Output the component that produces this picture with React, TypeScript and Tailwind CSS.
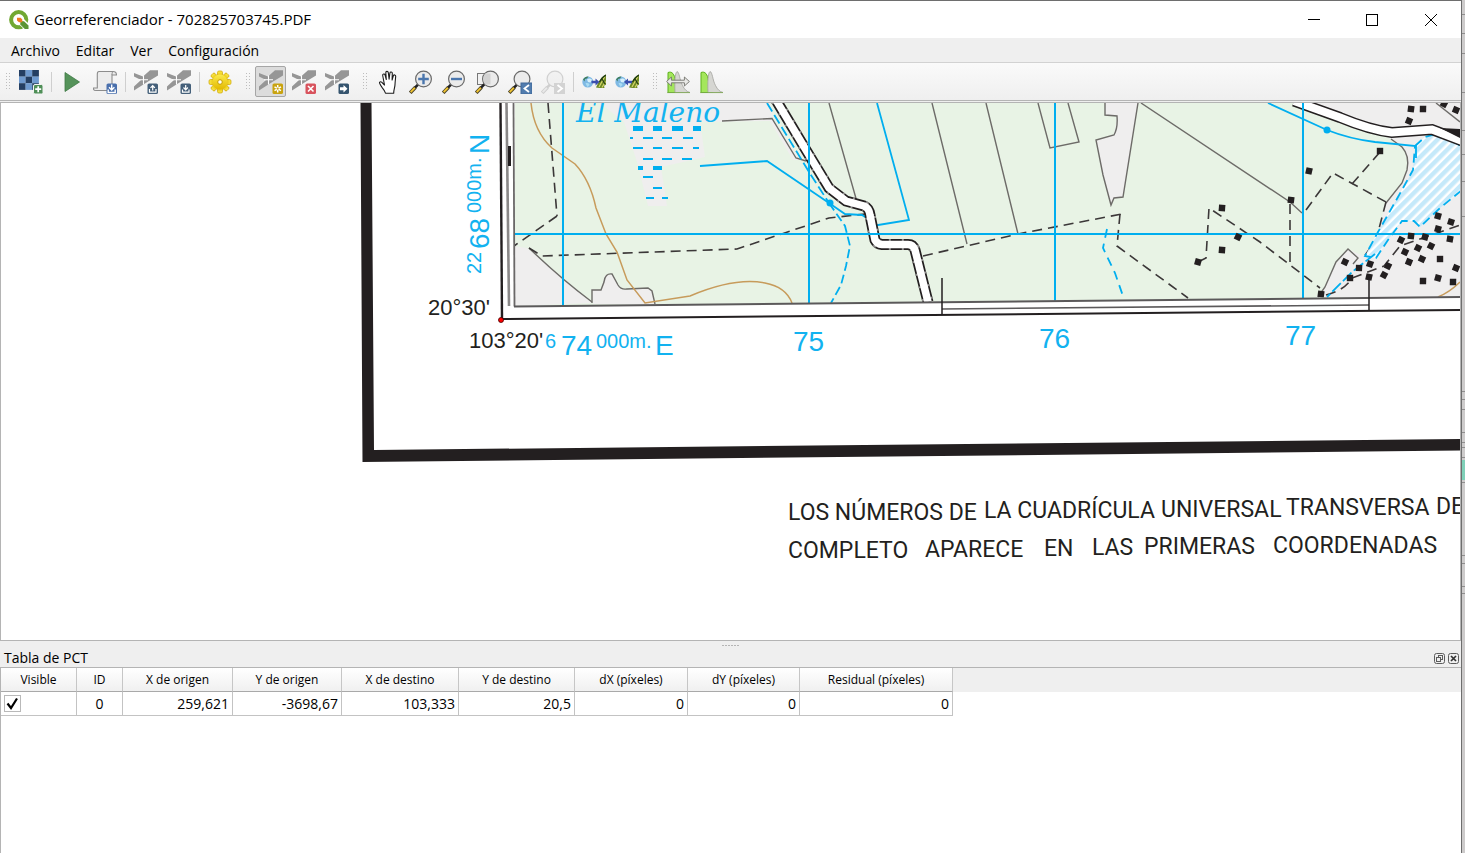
import type { ReactNode } from "react";

const CYAN = "#00aeef";
const INK = "#231f20";
const BUILT = "#efeeee";

/* ---------- Toolbar glyphs (24 x 24) ---------- */

function Glyph({ children }: { children: ReactNode }) {
  return (
    <svg viewBox="0 0 24 24" className="size-6" fill="none" aria-hidden="true">
      {children}
    </svg>
  );
}

function Badge({ fill, children }: { fill: string; children: ReactNode }) {
  return (
    <g>
      <rect x="13.5" y="13.5" width="10.5" height="10.5" rx="1.6" fill={fill} />
      {children}
    </g>
  );
}

function GcpBase() {
  return (
    <g>
      <path d="M0 3V6.500L7 10 0 16.500V20.500L12.500 12.500 24 5.500V.3H16L9 6.500z" fill="#969696" />
      <path d="M9.500 5.500v9M5 9.800h9" stroke="#fff" strokeWidth="1.100" />
    </g>
  );
}

function OpenRasterIcon() {
  const dark = "#243f63";
  const light = "#6f9bd0";
  const cells = [
    [dark, light, dark],
    [light, dark, light],
    [dark, light, dark],
  ];
  return (
    <Glyph>
      {cells.map((row, r) =>
        row.map((c, i) => <rect key={`${r}-${i}`} x={i * 6.6} y={r * 6.6} width="6.7" height="6.7" fill={c} />),
      )}
      <rect x="14.500" y="14.500" width="9.500" height="9.500" rx="1.500" fill="#4f8f57" stroke="#f4f4f4" />
      <path d="M19.200 16.200v6M16.200 19.200h6" stroke="#fff" strokeWidth="1.700" />
    </Glyph>
  );
}

function PlayIcon() {
  return (
    <Glyph>
      <path d="M5 2.500 19.500 12 5 21.500z" fill="#55935a" stroke="#3f7a45" strokeWidth=".8" />
    </Glyph>
  );
}

function ScriptIcon() {
  return (
    <Glyph>
      <path
        d="M6 1.500h14c2.500 0 3.500 1.500 3.500 3.500H19v15.500H3c-2 0-2.700-1-2.700-2.500h4V4c0-1.500.5-2.500 1.700-2.500z"
        fill="#ececec"
        stroke="#8c8c8c"
        strokeWidth="1.100"
      />
      <path d="M19 5c0-2 .2-3 1.300-3.400" stroke="#8c8c8c" />
      <Badge fill="#4a70ad">
        <path d="M18.700 14.500v5M16 17.300l2.700 2.700 2.700-2.700M15.200 19.500v3h7v-3" stroke="#fff" strokeWidth="1.400" />
      </Badge>
    </Glyph>
  );
}

function LoadGcpIcon() {
  return (
    <Glyph>
      <GcpBase />
      <Badge fill="#45607a">
        <path d="M18.700 20.500V16M16.500 17.800l2.200-2.300 2.200 2.300M15.500 19v3.200h6.500V19" stroke="#fff" strokeWidth="1.200" />
      </Badge>
    </Glyph>
  );
}

function SaveGcpIcon() {
  return (
    <Glyph>
      <GcpBase />
      <Badge fill="#45607a">
        <path d="M18.700 15v4.500M16.500 17.500l2.200 2.300 2.200-2.300M15.500 19.500v2.700h6.500v-2.700" stroke="#fff" strokeWidth="1.200" />
      </Badge>
    </Glyph>
  );
}

function GearIcon() {
  return (
    <Glyph>
      <defs>
        <linearGradient id="gear" x1="0" y1="0" x2="0" y2="1">
          <stop offset="0" stopColor="#fbea4c" />
          <stop offset="1" stopColor="#e2b800" />
        </linearGradient>
      </defs>
      {Array.from({ length: 8 }, (_, i) => (
        <rect
          key={i}
          x="9.500"
          y="1"
          width="5"
          height="6"
          rx="1.500"
          fill="url(#gear)"
          stroke="#cda400"
          strokeWidth=".7"
          transform={`rotate(${i * 45} 12 12)`}
        />
      ))}
      <circle cx="12" cy="12" r="7.600" fill="url(#gear)" />
      <circle cx="12" cy="12" r="2.300" fill="#fff" stroke="#c79d00" />
    </Glyph>
  );
}

function AddPointIcon() {
  return (
    <Glyph>
      <GcpBase />
      <Badge fill="#c9a30f">
        <path d="M18.700 15v7.500M15.500 16.900l6.500 3.700M22 16.900l-6.500 3.700" stroke="#fff" strokeWidth="1.500" />
        <circle cx="18.700" cy="18.700" r="1.100" fill="#c9a30f" />
      </Badge>
    </Glyph>
  );
}

function DeletePointIcon() {
  return (
    <Glyph>
      <GcpBase />
      <Badge fill="#d8535d">
        <path d="m16 16 5.500 5.500M21.500 16 16 21.500" stroke="#fff" strokeWidth="1.600" />
      </Badge>
    </Glyph>
  );
}

function MovePointIcon() {
  return (
    <Glyph>
      <GcpBase />
      <Badge fill="#35546e">
        <path d="M15 17.200h3.500V15l4 3.700-4 3.800v-2.300H15z" fill="#fff" />
      </Badge>
    </Glyph>
  );
}

function HandIcon() {
  return (
    <Glyph>
      <path
        d="M9.500 23.200c-.5-2-1.600-3.500-3.300-5.600-1-1.300-2-3-2.600-4.300-.5-1.200.9-2 2-1.200L8.500 15 6.700 5.500c-.3-1.600 1.900-2.200 2.400-.5l1.200 4.500-.5-6.800c-.1-1.700 2.200-1.800 2.500-.2l.8 6.700.8-6.200c.3-1.500 2.400-1.200 2.400.3l-.2 6.700 1.300-4.300c.5-1.400 2.400-.9 2.300.6-.1 2-.6 5-.7 8.200-.1 3.200-1.200 4.500-1.300 8.700z"
        fill="#fff"
        stroke="#1c1c1c"
        strokeWidth="1.100"
        strokeLinejoin="round"
      />
    </Glyph>
  );
}

function Lens({ cx = 14.5, faded = false, children }: { cx?: number; faded?: boolean; children?: ReactNode }) {
  return (
    <g opacity={faded ? 0.4 : 1}>
      <path d="M1.200 22.800 6.500 17.200" stroke={faded ? "#999" : "#4b4326"} strokeWidth="3.600" />
      <path d="M1.700 22.200 6 17.700" stroke={faded ? "#ddd" : "#f2c531"} strokeWidth="1.900" />
      <path d="m6 17.700 4-4" stroke={faded ? "#999" : "#222"} strokeWidth="2.600" />
      <circle cx={cx} cy="9" r="7.900" fill="#ebebeb" stroke={faded ? "#999" : "#6a6a6a"} strokeWidth="1.200" />
      {children}
    </g>
  );
}

function ZoomInIcon() {
  return (
    <Glyph>
      <Lens>
        <path d="M14.500 3.700v10.600M9.200 9h10.600" stroke="#4a76ad" strokeWidth="2.400" />
      </Lens>
    </Glyph>
  );
}

function ZoomOutIcon() {
  return (
    <Glyph>
      <Lens>
        <path d="M9 9h11" stroke="#4a76ad" strokeWidth="2.400" />
      </Lens>
    </Glyph>
  );
}

function ZoomLayerIcon() {
  return (
    <Glyph>
      <rect x="2.500" y="3.500" width="12" height="11" fill="#f1f1f1" stroke="#777" />
      <Lens cx={15.5}>
        <path d="M15.500 3.500v11h-5.300c-2.500-3-2.500-8 0-11z" fill="#d2d2d2" />
      </Lens>
    </Glyph>
  );
}

function ZoomLastIcon() {
  return (
    <Glyph>
      <Lens cx={14} />
      <rect x="13" y="13" width="11" height="11" fill="#517cae" stroke="#41699a" />
      <path d="m21 15-4.500 3.500L21 22" stroke="#fff" strokeWidth="1.800" />
    </Glyph>
  );
}

function ZoomNextIcon() {
  return (
    <Glyph>
      <Lens cx={14} faded />
      <rect x="13" y="13" width="11" height="11" fill="#d3d3d3" />
      <path d="m16.500 15 4.500 3.500-4.500 3.500" stroke="#fff" strokeWidth="1.800" />
    </Glyph>
  );
}

function LinkIcon({ reverse = false }: { reverse?: boolean }) {
  return (
    <Glyph>
      <circle cx="5.800" cy="12" r="5.500" fill="#7fb9e4" />
      <path d="M1 9.500c1.500-2.500 3.500-3.300 5.500-3l-1.500 2-2 .5-.5 2.500z" fill="#3f7d5c" />
      <path d="M5 9.500c2-1.500 4-1 5 .5l-1.500 2.500L6 12z" fill="#d7f0fb" />
      <path d="M3.500 13.500c2-1 4 0 4 1.500l-2 2z" fill="#a8dcf3" />
      <path d="M24 4.500v10.300l-2 1 .5 2.200h-5l-3.500-.5C17 11 19 7 24 4.500z" fill="#6d8a26" />
      <path d="M22.800 6.500 17 17M23.500 11.500 20 17.500" stroke="#d9d66a" strokeWidth="1.200" />
      <path d="M24 5c-3 1.500-5 4-6.500 7M20 9l3 5" stroke="#1f3a12" strokeWidth="1.200" />
      {reverse ? (
        <path d="m9 12 4-3.500v2.300h4v2.400h-4v2.300z" fill="#3b4fae" />
      ) : (
        <path d="m17.500 12-4-3.500v2.300h-4v2.400h4v2.300z" fill="#3b4fae" />
      )}
    </Glyph>
  );
}

function Histogram() {
  return (
    <g>
      <path d="M2 22.500V2.500C6 1 8.500 4 9.500 11c.7 5 1.500 9 4 11.500z" fill="#a4e65c" stroke="#5db01d" strokeWidth="1" />
      <path d="M9 22.500C8.500 12 9 3 11 1.500c2.500.5 2.500 8.500 5.500 14 2 4 4 6 7.500 7z" fill="#d6d6d2" stroke="#a2a29d" strokeWidth=".8" />
      <path d="M1 22.600h23" stroke="#7dab4e" strokeWidth=".8" />
    </g>
  );
}

function FullHistogramIcon() {
  return (
    <Glyph>
      <Histogram />
      <path
        d="M.6 11.500 5.400 7v3.200h13V7l5 4.500-5 4.500v-3.200h-13V16z"
        fill="#e9e9e6"
        stroke="#72726c"
        strokeWidth=".9"
      />
    </Glyph>
  );
}

function LocalHistogramIcon() {
  return (
    <Glyph>
      <Histogram />
    </Glyph>
  );
}

function QgisLogo() {
  return (
    <svg viewBox="0 0 20 20" className="size-5" aria-hidden="true">
      <circle cx="9.700" cy="9.700" r="7.600" fill="none" stroke="#71a832" strokeWidth="4" />
      <path d="m9 8.500 5.500.3 5.500 5.200v5.500h-4.500L9 13.500z" fill="#fff" />
      <path d="m11.500 11 3.500.2 4.500 4.300V19h-3.700l-4.600-4.500z" fill="#5b9334" />
      <path d="M8 7.800h3.600l1.700 1.700v2.800H10L8 10.500z" fill="#ee7b22" />
    </svg>
  );
}

/* ---------- Toolbar ---------- */

interface Tool {
  label: string;
  icon: ReactNode;
  active?: boolean;
  disabled?: boolean;
}

const toolbars: Tool[][][] = [
  [
    [{ label: "Abrir ráster", icon: <OpenRasterIcon /> }],
    [
      { label: "Comenzar georreferenciado", icon: <PlayIcon /> },
      { label: "Generar script de GDAL", icon: <ScriptIcon /> },
    ],
    [
      { label: "Cargar puntos PCT", icon: <LoadGcpIcon /> },
      { label: "Guardar puntos PCT como", icon: <SaveGcpIcon /> },
    ],
    [{ label: "Configuración de la transformación", icon: <GearIcon /> }],
  ],
  [
    [
      { label: "Añadir punto", icon: <AddPointIcon />, active: true },
      { label: "Borrar punto", icon: <DeletePointIcon /> },
      { label: "Mover punto PCT", icon: <MovePointIcon /> },
    ],
  ],
  [
    [
      { label: "Desplazar", icon: <HandIcon /> },
      { label: "Acercar zum", icon: <ZoomInIcon /> },
      { label: "Alejar zum", icon: <ZoomOutIcon /> },
      { label: "Zum a la capa", icon: <ZoomLayerIcon /> },
      { label: "Zum anterior", icon: <ZoomLastIcon /> },
      { label: "Zum siguiente", icon: <ZoomNextIcon />, disabled: true },
    ],
    [
      { label: "Enlazar georreferenciador con QGIS", icon: <LinkIcon /> },
      { label: "Enlazar QGIS con georreferenciador", icon: <LinkIcon reverse /> },
    ],
  ],
  [
    [
      { label: "Estirar histograma completo", icon: <FullHistogramIcon /> },
      { label: "Estirar histograma local", icon: <LocalHistogramIcon /> },
    ],
  ],
];

function ToolButton({ label, icon, active, disabled }: Tool) {
  return (
    <button
      type="button"
      aria-label={label}
      aria-pressed={active}
      disabled={disabled}
      className={
        active
          ? "flex h-[31px] w-[31px] items-center justify-center rounded-[2px] border border-[#a6a6a6] bg-[#dcdcdc]"
          : "flex h-[31px] w-[31px] items-center justify-center"
      }
    >
      {icon}
    </button>
  );
}

function Grip() {
  return (
    <svg viewBox="0 0 5 18" className="h-[18px] w-[5px]" aria-hidden="true">
      {Array.from({ length: 6 }, (_, i) => (
        <g key={i} fill="#bdbdbd">
          <rect x="0" y={i * 3} width="1" height="1" />
          <rect x="3" y={i * 3} width="1" height="1" />
        </g>
      ))}
    </svg>
  );
}

function Toolbars() {
  return (
    <div className="flex h-[38px] items-center border-b border-[#b4b4b4] bg-linear-to-b from-[#fafafa] to-[#efefef]">
      {toolbars.map((groups, b) => (
        <div key={b} role="toolbar" className="flex items-center">
          <div className={b === 0 ? "w-[15px] pl-1.5" : "w-5 pl-[11px]"}>
            <Grip />
          </div>
          {groups.map((group, g) => (
            <div key={g} className="flex items-center">
              {g > 0 && (
                <div className="flex w-[10px] justify-center">
                  <div className="h-5 w-px bg-[#cfcfcf]" />
                </div>
              )}
              <div className="flex gap-0.5">
                {group.map((tool) => (
                  <ToolButton key={tool.label} {...tool} />
                ))}
              </div>
            </div>
          ))}
        </div>
      ))}
    </div>
  );
}

/* ---------- Map canvas ---------- */

const marshDashes: [number, number, number, number][] = [
  [633, 128.5, 10, 5], [653, 128.5, 9, 5], [672, 128.5, 11, 5], [693, 128.5, 8, 5],
  [630, 138, 3, 2], [643, 138, 10, 2], [662, 138, 10, 2], [683, 138, 10, 2],
  [633, 148, 10, 2], [653, 148, 9, 2], [672, 148, 11, 2], [693, 148, 6, 2],
  [643, 159, 10, 2], [662, 159, 10, 2], [682, 159, 10, 2],
  [638, 168, 5, 4], [653, 168, 9, 4],
  [643, 177, 10, 2], [653, 188, 9, 2], [646, 198, 8, 2], [662, 198, 6, 2],
];

const houses: [number, number][] = [
  [1411, 109], [1423, 109], [1409, 121], [1444, 104], [1456, 110],
  [1380, 151], [1309, 171], [1291, 200], [1222, 208], [1238, 237], [1222, 250], [1198, 262],
  [1438, 216], [1451, 222], [1438, 229], [1450, 239], [1401, 240], [1411, 236], [1425, 237],
  [1431, 246], [1418, 248], [1405, 252], [1409, 262], [1422, 259], [1440, 259], [1456, 268],
  [1345, 262], [1359, 268], [1370, 264], [1388, 266], [1350, 278], [1369, 277], [1384, 275],
  [1423, 281], [1438, 278], [1453, 282], [1321, 294],
];

const mainRoad = "M776 100 806 150 829 188 846 201 864 206Q869 208 870 215L875 240Q877 244 882 244.500H907Q913 244 915 250L928 302";
const topRoad = "M1294 101 1340 117.500Q1370 130 1392 132.500L1432 129.500 1462 141";
const lake =
  "M1415 146 1425 137 1436 134 1448 138 1462 147V190L1440 208 1420 227 1414 221 1402 221 1388 240 1376 258 1365 256 1378 232 1398 197 1413 170z";

const captionTop: [string, number, number][] = [
  ["LOS NÚMEROS DE", 788, 520],
  ["LA CUADRÍCULA", 984, 518],
  ["UNIVERSAL", 1161, 517],
  ["TRANSVERSA", 1286, 515],
  ["DE", 1436, 514],
];
const captionBottom: [string, number, number][] = [
  ["COMPLETO", 788, 558],
  ["APARECE", 925, 557],
  ["EN", 1044, 556],
  ["LAS", 1092, 555],
  ["PRIMERAS", 1144, 554],
  ["COORDENADAS", 1273, 553],
];

function MapCanvas() {
  return (
    <svg
      viewBox="1 103 1459 537"
      preserveAspectRatio="xMinYMin slice"
      className="absolute inset-0 size-full"
      fill="none"
      role="img"
      aria-label="Mapa ráster"
    >
      <defs>
        <pattern id="water" width="7" height="7" patternUnits="userSpaceOnUse" patternTransform="rotate(45)">
          <rect width="7" height="7" fill="#fff" />
          <rect width="4.500" height="7" fill="#c5e9fa" />
        </pattern>
      </defs>

      <path d="M360.500 103H371.500L374 450 1460 439V450.500L362.500 462z" fill={INK} />

      <path d="M514 103H1460V297L514 306z" fill="#e8f3e5" />

      <g fill={BUILT}>
        <path d="M514 246 527 248 592 303 514 306z" />
        <path d="M593 304 592 289 601 290 605 275H612L618 285 623 290 648 288 652 291 654 304z" />
        <path d="M600 103H770L773 119 800 160H793L770 121 700 122 705 157 661 167 667 206H648L638 165 624 122z" />
        <path d="M1105 103V115L1117 116 1114 135 1096 140 1103 175 1111 205 1114 198 1123 197 1138 103z" />
        <path d="M1305 103H1460V297H1316L1325 287 1336 263 1348 249 1363 256 1378 232 1386 203 1404 180 1408 165 1405 150 1391 139z" />
      </g>

      <g stroke="#6d6b68" strokeWidth="1.400">
        <path d="M529 248Q560 278 592 302" />
        <path d="M592 303V290L601 290 604 282Q605 273 612 274L618 285Q621 290 627 289L648 288 652 291 655 304" />
        <path d="M722 121 772 118.500 796 158 806 161" />
        <path d="M829 103 857 202M932 103 967 244M986 103 1018 234" />
        <path d="M1038 103 1050 148 1079 142 1068 103" />
        <path d="M1105 103V115L1117 116Q1118 128 1114 135L1096 140 1103 175 1111 205 1114 198 1123 197 1138 103" />
        <path d="M1141 103 1290 202 1302 213" />
        <path d="M1391 139 1402 147Q1410 156 1407 170L1402 183 1386 203" />
        <path d="M1436 103 1460 122" />
        <path d="M1318 297 1325 287 1336 262 1348 249 1358 258 1353 264" />
      </g>

      <g stroke="#3b3738" strokeWidth="1.600" strokeDasharray="10 6">
        <path d="M548 103 557 216M557 216 514 246" />
        <path d="M529 248 542 256 737 249 829 218 865 214" />
        <path d="M923 256 1018 234 1122 214" />
        <path d="M1120 214 1117 246 1188 298" />
        <path d="M1198 262 1206 258 1209 208 1260 242 1320 288" />
        <path d="M1290 204V262" />
        <path d="M1306 210 1333 173 1386 202" />
        <path d="M1352 184 1380 152" />
        <path d="M1386 202 1376 240 1363 258" />
        <path d="M1326 295Q1345 290 1352 278L1384 266 1400 246 1460 225" />
      </g>

      <g stroke="#c79b5b" strokeWidth="1.500">
        <path d="M531 103Q534 132 552 148L575 164Q590 180 596 208L606 234 617 252 627 280 645 303 690 296Q735 277 765 283 786 287 792 303" />
        <path d="M1438 297Q1450 292 1460 282" />
      </g>

      <path d={lake} fill="url(#water)" stroke={CYAN} strokeWidth="1.800" strokeDasharray="9 5" />
      <path d="M1375 254 1352 272 1327 297" stroke={CYAN} strokeWidth="1.800" strokeDasharray="12 3" />

      <g stroke={CYAN} strokeWidth="1.800">
        <path d="M700 166 767 161 829 203 845 214 862 215 870 220" />
        <path d="M877 103 909 220 872 226" />
        <path d="M1268 103 1327 130Q1350 139 1375 142L1416 146V158" />
        <path d="M767 103 809 172 829 203" strokeDasharray="10 4" />
        <path d="M829 203 845 226 850 246 846 266 841 285 831 303" strokeDasharray="9 4" />
        <path d="M1107 229 1103 248 1115 273 1124 299" strokeDasharray="9 6" />
      </g>

      <path d={mainRoad} stroke={INK} strokeWidth="11" />
      <path d={mainRoad} stroke="#8d8b8b" strokeWidth="11" strokeDasharray="2 11" />
      <path d={mainRoad} stroke="#fff" strokeWidth="7.500" />
      <path d={topRoad} stroke={INK} strokeWidth="11" />
      <path d={topRoad} stroke="#fff" strokeWidth="8" />
      <path d="M1440 128 1460 129V138L1450 133z" fill={INK} />

      <g stroke={CYAN} strokeWidth="2">
        <path d="M563 103V307M809 103V304M1055 103V301M1303 103V298M514 234H1460" />
      </g>

      {marshDashes.map(([x, y, w, h]) => (
        <rect key={`${x}-${y}`} x={x} y={y - h / 2} width={w} height={h} fill={CYAN} />
      ))}
      <circle cx="830" cy="203" r="3.500" fill={CYAN} />
      <circle cx="1327" cy="130" r="3.500" fill={CYAN} />
      {houses.map(([x, y]) => (
        <rect
          key={`${x}-${y}`}
          x={x - 3.2}
          y={y - 3.2}
          width="6.4"
          height="6.4"
          fill={INK}
          transform={`rotate(${(x * 7) % 30} ${x} ${y})`}
        />
      ))}

      <path d="M499 103H515V306L1460 296.500V311L501 320z" fill="#fff" />
      <g stroke={INK}>
        <path d="M500.500 103 502 319" strokeWidth="2.400" />
        <path d="M506.500 103 509 306" stroke="#8a8888" strokeWidth="2.600" />
        <path d="M509.500 146V166" strokeWidth="3" />
        <path d="M513.500 103 514.500 306.500" stroke="#6a6868" strokeWidth="1.800" />
        <path d="M514 306.500 1460 297" stroke="#5b595a" strokeWidth="2" />
        <path d="M501 319 1460 310" strokeWidth="2" />
        <path d="M942 309 1369 305" stroke="#5b595a" strokeWidth="1.600" />
        <path d="M942 278V315M1369 276V310" strokeWidth="1.500" />
      </g>
      <circle cx="501" cy="320" r="2.500" fill="#f00" stroke="#400" strokeWidth=".8" />

      <text x="576" y="122" className="font-['DejaVu_Serif',serif] text-[28px] italic" fill="#12b2f0">
        El Maleno
      </text>

      <g className="font-['Liberation_Sans',sans-serif]">
        <g className="text-[22px]" fill={INK}>
          <text x="428" y="315">20°30'</text>
          <text x="469" y="348">103°20'</text>
        </g>
        <g fill="#12b2f0">
          <text x="545" y="348" className="text-[20px]">6</text>
          <text x="561" y="355" className="text-[28px]">74</text>
          <text x="596" y="348" className="text-[20px]">000m.</text>
          <text x="655" y="355" className="text-[28px]">E</text>
          <text x="793" y="351" className="text-[28px]">75</text>
          <text x="1039" y="348" className="text-[28px]">76</text>
          <text x="1285" y="345" className="text-[28px]">77</text>
          <g transform="rotate(-90)">
            <text x="-274" y="481" className="text-[20px]">22</text>
            <text x="-249" y="489" className="text-[28px]">68</text>
            <text x="-213" y="481" className="text-[20px]">000m.</text>
            <text x="-154" y="489" className="text-[28px]">N</text>
          </g>
        </g>
      </g>
      <g className="font-['Roboto','Liberation_Sans',sans-serif] text-[23px]" fill={INK}>
        {[...captionTop, ...captionBottom].map(([t, x, y]) => (
          <text key={t} x={x} y={y}>
            {t}
          </text>
        ))}
      </g>
    </svg>
  );
}

/* ---------- GCP table ---------- */

function GcpTable() {
  const th =
    "border-r border-b border-r-[#c6c6c6] border-b-[#a9a9a9] bg-linear-to-b from-white to-[#f0f0f0] p-0 text-center font-normal";
  const td = "border-r border-b border-[#c3c3c3] p-0 pr-[3px] text-right";
  return (
    <section aria-label="Tabla de PCT" className="flex h-[213px] flex-col border-t border-[#b4b4b4] bg-[#efefef]">
      <div className="flex h-2 items-center justify-center text-[#b5b5b5]">
        <svg viewBox="0 0 17 1" className="h-px w-[17px]" aria-hidden="true">
          <path d="M0 .5h17" stroke="currentColor" strokeDasharray="2 1" />
        </svg>
      </div>
      <div className="flex h-[18px] items-center justify-between pr-0.5 pl-1">
        <h2 className="text-[14px] leading-[18px]">Tabla de PCT</h2>
        <div className="flex gap-[3px]">
          <button type="button" aria-label="Flotar panel">
            <svg viewBox="0 0 11 11" className="size-[11px]" fill="none" stroke="#5c5c5c" aria-hidden="true">
              <rect x=".5" y=".5" width="10" height="10" rx="2" />
              <rect x="4.500" y="2.500" width="4" height="4" />
              <rect x="2.500" y="4.500" width="4" height="4" fill="#efefef" />
            </svg>
          </button>
          <button type="button" aria-label="Cerrar panel">
            <svg viewBox="0 0 11 11" className="size-[11px]" fill="none" stroke="#5c5c5c" aria-hidden="true">
              <rect x=".5" y=".5" width="10" height="10" rx="2" />
              <path d="m3 3 5 5M8 3 3 8" stroke="#333" strokeWidth="1.700" />
            </svg>
          </button>
        </div>
      </div>
      <div className="flex-1 border-t border-l border-[#b4b4b4] bg-[linear-gradient(#efefef_24px,white_24px)]">
        <table className="w-[952px] table-fixed border-separate border-spacing-0">
          <colgroup>
            <col className="w-[76px]" />
            <col className="w-[46px]" />
            <col className="w-[110px]" />
            <col className="w-[109px]" />
            <col className="w-[117px]" />
            <col className="w-[116px]" />
            <col className="w-[113px]" />
            <col className="w-[112px]" />
            <col className="w-[153px]" />
          </colgroup>
          <thead>
            <tr className="h-6 text-[12px]">
              {[
                "Visible",
                "ID",
                "X de origen",
                "Y de origen",
                "X de destino",
                "Y de destino",
                "dX (píxeles)",
                "dY (píxeles)",
                "Residual (píxeles)",
              ].map((h) => (
                <th key={h} scope="col" className={th}>
                  {h}
                </th>
              ))}
            </tr>
          </thead>
          <tbody>
            <tr className="h-6 bg-white text-[14px]">
              <td className="border-r border-b border-[#c3c3c3] p-0">
                <label className="relative ml-[3px] block size-[17px]">
                  <input
                    type="checkbox"
                    defaultChecked
                    aria-label="Visible"
                    className="peer block size-[17px] appearance-none border border-[#b9b9b9] bg-white"
                  />
                  <svg
                    viewBox="0 0 17 17"
                    className="pointer-events-none absolute inset-0 hidden size-[17px] peer-checked:block"
                    fill="none"
                    aria-hidden="true"
                  >
                    <path d="m3.500 8.500 3.500 4.500 6-9.500" stroke="#000" strokeWidth="2.200" />
                  </svg>
                </label>
              </td>
              <td className="border-r border-b border-[#c3c3c3] p-0 text-center">0</td>
              {["259,621", "-3698,67", "103,333", "20,5", "0", "0", "0"].map((v, i) => (
                <td key={i} className={td}>
                  {v}
                </td>
              ))}
            </tr>
          </tbody>
        </table>
      </div>
    </section>
  );
}

/* ---------- Window ---------- */

export default function App() {
  return (
    <div className="flex min-h-screen bg-[#cdcbcb] font-['Open_Sans','Noto_Sans',sans-serif] text-black">
      <main className="flex min-w-0 flex-1 flex-col border-t border-r border-[#6e6e6e] bg-[#efefef]">
        <header className="flex h-[37px] items-center justify-between bg-white pl-[9px]">
          <div className="flex items-center gap-[5px]">
            <QgisLogo />
            <h1 className="text-[15px]">Georreferenciador - 702825703745.PDF</h1>
          </div>
          <div className="flex h-full">
            <button type="button" aria-label="Minimizar" className="flex w-[58px] items-center justify-center">
              <svg viewBox="0 0 12 12" className="size-3" stroke="#000" fill="none" aria-hidden="true">
                <path d="M0 5.500h12" />
              </svg>
            </button>
            <button type="button" aria-label="Maximizar" className="flex w-[58px] items-center justify-center">
              <svg viewBox="0 0 12 12" className="size-3" stroke="#000" fill="none" aria-hidden="true">
                <rect x=".5" y=".5" width="11" height="11" />
              </svg>
            </button>
            <button type="button" aria-label="Cerrar" className="flex w-[60px] items-center justify-center">
              <svg viewBox="0 0 12 12" className="size-3" stroke="#000" fill="none" aria-hidden="true">
                <path d="m0 0 12 12M12 0 0 12" />
              </svg>
            </button>
          </div>
        </header>

        <nav className="flex h-[25px] items-center gap-4 border-b border-[#d2d2d2] pl-[11px] text-[14px]">
          {["Archivo", "Editar", "Ver", "Configuración"].map((m) => (
            <button key={m} type="button">
              {m}
            </button>
          ))}
        </nav>

        <Toolbars />

        <div className="relative mt-px min-h-80 flex-1 overflow-hidden border-t border-r border-l border-[#b4b4b4] bg-white">
          <MapCanvas />
        </div>

        <GcpTable />
      </main>

      <aside aria-hidden="true" className="w-[3px] bg-[#cdcbcb]">
        <svg className="h-full w-[3px]" viewBox="0 0 3 853" preserveAspectRatio="none">
          <path
            d="M0 14.500h3M0 33.500h3M0 53.500h3M0 92.500h3M0 130.500h3M0 154.500h3M0 181.500h3M0 216.500h3M0 391.500h3M0 399.500h3M0 409.500h3M0 432.500h3M0 442.500h3M0 447.500h3M0 457.500h3M0 482.500h3M0 555.500h3M0 563.500h3M0 586.500h3M0 593.500h3"
            stroke="#8f8e8e"
          />
          <rect y="460" width="3" height="20" fill="#7fd0b8" />
        </svg>
      </aside>
    </div>
  );
}
